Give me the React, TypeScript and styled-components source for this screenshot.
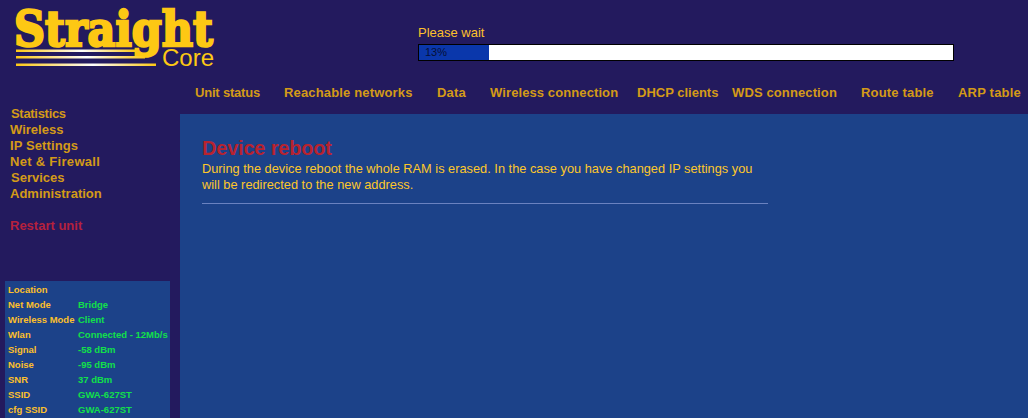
import React from "react";
import styled, { createGlobalStyle } from "styled-components";

const GlobalStyle = createGlobalStyle`
  html, body {
    margin: 0;
    height: 100%;
    overflow: hidden;
    background: #231a5e;
    font-family: "Liberation Sans", Arial, sans-serif;
  }
`;

const Page = styled.div`
  width: 1028px;
  height: 418px;
  display: grid;
  grid-template-columns: 180px 848px;
  grid-template-rows: 80px 34px 304px;
  overflow: hidden;
`;

const Header = styled.header`
  grid-column: 1 / 3;
  display: flex;
`;

const LogoBox = styled.div`
  width: 418px;
  flex: none;
`;

const LogoSvg = styled.svg`
  display: block;
`;

const ProgressArea = styled.div`
  width: 536px;
  padding-top: 25px;
`;

const ProgressLabel = styled.div`
  font-size: 13px;
  line-height: 15px;
  color: #fdc02b;
  margin-bottom: 4px;
`;

const ProgressTrack = styled.div`
  position: relative;
  height: 15px;
  border: 1px solid #000;
  background: #fff;
`;

const ProgressFill = styled.div`
  height: 100%;
  background: #0a37ab;
`;

const ProgressText = styled.span`
  position: absolute;
  left: 6px;
  top: 0;
  font-size: 11px;
  line-height: 15px;
  color: #061038;
`;

const Nav = styled.nav`
  display: flex;
  padding-left: 15px;
  padding-top: 5px;
`;

const NavItem = styled.a<{ $width: number; $spacing: number }>`
  width: ${(p) => p.$width}px;
  flex: none;
  font-size: 13px;
  font-weight: bold;
  line-height: 16px;
  letter-spacing: ${(p) => p.$spacing}px;
  color: #d49a17;
  white-space: nowrap;
`;

const Sidebar = styled.aside`
  grid-column: 1;
  grid-row: 2 / 4;
  display: flex;
  flex-direction: column;
  justify-content: space-between;
`;

const Menu = styled.ul`
  list-style: none;
  margin: 0;
  padding: 26px 0 0 10px;
`;

const MenuItem = styled.li<{ $danger?: boolean; $indent?: number; $spacing?: number }>`
  font-size: 13px;
  font-weight: bold;
  line-height: 16px;
  letter-spacing: ${(p) => p.$spacing ?? 0}px;
  padding-left: ${(p) => p.$indent ?? 0}px;
  margin-top: ${(p) => (p.$danger ? 16 : 0)}px;
  color: ${(p) => (p.$danger ? "#b5213d" : "#d49a17")};
`;

const InfoPanel = styled.div`
  width: 165px;
  margin-left: 5px;
  height: 137px;
  padding: 1px 0 0 3px;
  box-sizing: border-box;
  background: #1c4289;
  overflow: hidden;
`;

const InfoRow = styled.div`
  display: flex;
  height: 15px;
  font-size: 9.5px;
  font-weight: bold;
  line-height: 15px;
  white-space: nowrap;
`;

const InfoLabel = styled.span`
  width: 70px;
  flex: none;
  color: #fdc02b;
`;

const InfoValue = styled.span`
  color: #12e04a;
`;

const Content = styled.main`
  grid-column: 2;
  grid-row: 3;
  background: #1c4289;
  padding: 22px 0 0 22px;
`;

const Title = styled.h1`
  margin: 0;
  font-size: 20px;
  line-height: 25px;
  font-weight: bold;
  letter-spacing: -0.2px;
  color: #b8232f;
`;

const Message = styled.p`
  margin: 0;
  width: 566px;
  font-size: 12.8px;
  line-height: 16px;
  color: #fdc72b;
`;

const Divider = styled.hr`
  width: 566px;
  margin: 10px 0 0;
  border: 0;
  border-top: 1px solid #6a82c0;
`;

const navItems: [string, number, number][] = [
  ["Unit status", 89, -0.2],
  ["Reachable networks", 153, 0.16],
  ["Data", 53, 0.2],
  ["Wireless connection", 147, 0.1],
  ["DHCP clients", 95, 0],
  ["WDS connection", 129, 0.12],
  ["Route table", 97, 0.18],
  ["ARP table", 70, 0.2],
];

const infoRows: [string, string][] = [
  ["Location", ""],
  ["Net Mode", "Bridge"],
  ["Wireless Mode", "Client"],
  ["Wlan", "Connected - 12Mb/s"],
  ["Signal", "-58 dBm"],
  ["Noise", "-95 dBm"],
  ["SNR", "37 dBm"],
  ["SSID", "GWA-627ST"],
  ["cfg SSID", "GWA-627ST"],
];

const Logo = () => (
  <LogoSvg width="240" height="76" viewBox="0 0 240 76">
    <defs>
      <linearGradient id="rule" x1="0" x2="1" y1="0" y2="0">
        <stop offset="0" stopColor="#fdc814" />
        <stop offset="0.55" stopColor="#ffffff" />
        <stop offset="1" stopColor="#fdc814" />
      </linearGradient>
    </defs>
    <text
      x="14"
      y="46"
      fill="#fdc814"
      stroke="#fdc814"
      strokeWidth="2.5"
      fontFamily="'DejaVu Serif', serif"
      fontWeight="bold"
      fontSize="49"
      textLength="199"
      lengthAdjust="spacingAndGlyphs"
    >
      Straight
    </text>
    <rect x="16" y="49.5" width="120" height="2.5" fill="url(#rule)" />
    <rect x="16" y="56" width="129" height="2.5" fill="url(#rule)" />
    <rect x="16" y="63.5" width="140" height="2.5" fill="url(#rule)" />
    <text x="162" y="65.5" fill="#fdc814" fontFamily="'Liberation Sans', sans-serif" fontSize="24">
      Core
    </text>
  </LogoSvg>
);

export default function App() {
  return (
    <>
      <GlobalStyle />
      <Page>
        <Header>
          <LogoBox>
            <Logo />
          </LogoBox>
          <ProgressArea>
            <ProgressLabel>Please wait</ProgressLabel>
            <ProgressTrack>
              <ProgressFill style={{ width: "13.2%" }} />
              <ProgressText>13%</ProgressText>
            </ProgressTrack>
          </ProgressArea>
        </Header>
        <Sidebar>
          <Menu>
            <MenuItem $indent={1} $spacing={-0.3}>
              Statistics
            </MenuItem>
            <MenuItem>Wireless</MenuItem>
            <MenuItem $spacing={0.1}>IP Settings</MenuItem>
            <MenuItem $spacing={0.3}>Net &amp; Firewall</MenuItem>
            <MenuItem $indent={1}>Services</MenuItem>
            <MenuItem>Administration</MenuItem>
            <MenuItem $danger>Restart unit</MenuItem>
          </Menu>
          <InfoPanel>
            {infoRows.map(([label, value]) => (
              <InfoRow key={label}>
                <InfoLabel>{label}</InfoLabel>
                <InfoValue>{value}</InfoValue>
              </InfoRow>
            ))}
          </InfoPanel>
        </Sidebar>
        <Nav>
          {navItems.map(([label, width, spacing]) => (
            <NavItem key={label} $width={width} $spacing={spacing}>
              {label}
            </NavItem>
          ))}
        </Nav>
        <Content>
          <Title>Device reboot</Title>
          <Message>
            During the device reboot the whole RAM is erased. In the case you have changed IP settings you will be
            redirected to the new address.
          </Message>
          <Divider />
        </Content>
      </Page>
    </>
  );
}
